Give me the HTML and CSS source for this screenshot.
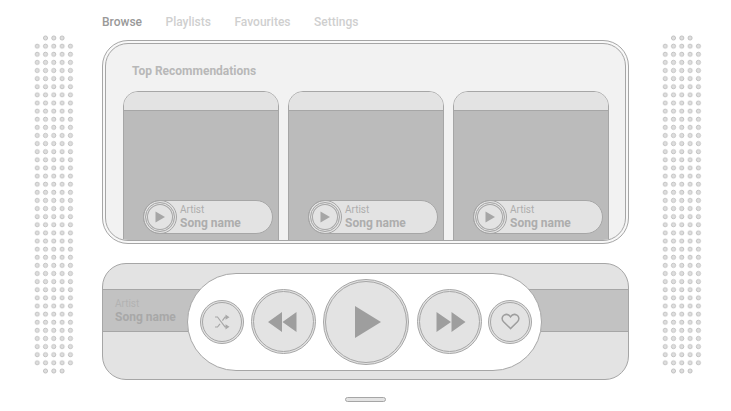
FILE: index.html
```html
<!DOCTYPE html>
<html lang="en">
<head>
    <meta charset="UTF-8">
    <meta name="viewport" content="width=device-width, initial-scale=1.0">
    <title>Music player</title>
    <link rel="stylesheet" href="styles.css">
</head>
<body>
    <div class="page">
        <svg class="dots dots-left" width="41" height="342" viewBox="0 0 41 342">
            <defs>
                <pattern id="dot" x="0" y="10.1" width="8.3" height="8.12" patternUnits="userSpaceOnUse">
                    <circle cx="4.2" cy="4.06" r="2.1"/>
                </pattern>
                <g id="dotfield">
                    <circle cx="12.5" cy="6" r="2.1"/>
                    <circle cx="20.8" cy="6" r="2.1"/>
                    <circle cx="29.1" cy="6" r="2.1"/>
                    <rect x="0" y="10.1" width="41" height="324.8" fill="url(#dot)" stroke="none"/>
                    <circle cx="12.5" cy="339" r="2.1"/>
                    <circle cx="20.8" cy="339" r="2.1"/>
                    <circle cx="29.1" cy="339" r="2.1"/>
                </g>
            </defs>
            <use href="#dotfield"/>
        </svg>

        <main class="main">
            <nav class="nav">
                <a class="nav-item active">Browse</a>
                <a class="nav-item">Playlists</a>
                <a class="nav-item">Favourites</a>
                <a class="nav-item">Settings</a>
            </nav>

            <section class="recs">
                <div class="recs-inner">
                    <h2 class="recs-title">Top Recommendations</h2>
                    <div class="cards">
                        <div class="card">
                            <div class="card-head"></div>
                            <div class="card-body">
                                <div class="song">
                                    <span class="mini-play"><svg width="12" height="12" viewBox="0 0 12 12"><path d="M1.5 0.5 L11 6 L1.5 11.5 Z"/></svg></span>
                                    <div class="song-text">
                                        <span class="artist">Artist</span>
                                        <span class="song-name">Song name</span>
                                    </div>
                                </div>
                            </div>
                        </div>
                        <div class="card">
                            <div class="card-head"></div>
                            <div class="card-body">
                                <div class="song">
                                    <span class="mini-play"><svg width="12" height="12" viewBox="0 0 12 12"><path d="M1.5 0.5 L11 6 L1.5 11.5 Z"/></svg></span>
                                    <div class="song-text">
                                        <span class="artist">Artist</span>
                                        <span class="song-name">Song name</span>
                                    </div>
                                </div>
                            </div>
                        </div>
                        <div class="card">
                            <div class="card-head"></div>
                            <div class="card-body">
                                <div class="song">
                                    <span class="mini-play"><svg width="12" height="12" viewBox="0 0 12 12"><path d="M1.5 0.5 L11 6 L1.5 11.5 Z"/></svg></span>
                                    <div class="song-text">
                                        <span class="artist">Artist</span>
                                        <span class="song-name">Song name</span>
                                    </div>
                                </div>
                            </div>
                        </div>
                    </div>
                </div>
            </section>

            <section class="player">
                <div class="band">
                    <div class="song-text">
                        <span class="artist">Artist</span>
                        <span class="song-name">Song name</span>
                    </div>
                </div>
                <div class="controls">
                    <button class="ctl ctl-s">
                        <svg width="16" height="16" viewBox="0 0 16 16" fill="none" stroke="#a8a8a8" stroke-width="1.2">
                            <path d="M1 3 H3.5 L11 12.8 H13"/>
                            <path d="M1 13 H3.5 L6 9.8 M8.4 6.6 L11 3.2 H13"/>
                            <path d="M11.5 0.6 V5.8 L15.5 3.2 Z M11.5 10.2 V15.4 L15.5 12.8 Z" fill="#a8a8a8" stroke="none"/>
                        </svg>
                    </button>
                    <button class="ctl ctl-m rew">
                        <svg width="29" height="20" viewBox="0 0 29 20"><path d="M14 0 V20 L0 10 Z M28.5 0 V20 L14.5 10 Z"/></svg>
                    </button>
                    <button class="ctl ctl-l">
                        <svg width="26" height="32" viewBox="0 0 26 32"><path d="M0 0 L26 16 L0 32 Z"/></svg>
                    </button>
                    <button class="ctl ctl-m ff">
                        <svg width="30" height="20" viewBox="0 0 30 20"><path d="M0.5 0 L15 10 L0.5 20 Z M15.5 0 L29.5 10 L15.5 20 Z"/></svg>
                    </button>
                    <button class="ctl ctl-s">
                        <svg width="19" height="17" viewBox="0 0 20 18" fill="none" stroke="#9e9e9e" stroke-width="1.6">
                            <path d="M10 16.5 L2.6 9.2 C0.4 7 0.8 3.6 3.2 2.2 C5.6 0.9 8.4 1.7 10 4.2 C11.6 1.7 14.4 0.9 16.8 2.2 C19.2 3.6 19.6 7 17.4 9.2 Z"/>
                        </svg>
                    </button>
                </div>
            </section>

            <div class="home-bar"></div>
        </main>

        <svg class="dots dots-right" width="41" height="342" viewBox="0 0 41 342">
            <use href="#dotfield"/>
        </svg>
    </div>
</body>
</html>
```

FILE: styles.css
```css
* {
    box-sizing: border-box;
}
html, body {
    margin: 0;
    background: #fff;
}
body {
    font-family: Roboto, "Liberation Sans", sans-serif;
    color: #aaa;
    overflow: hidden;
}
.page {
    display: flex;
    align-items: flex-start;
    width: 731px;
    height: 411px;
}
.dots {
    flex: none;
    margin-top: 32px;
    fill: #dedede;
    stroke: #a8a8a8;
    stroke-width: 0.6;
}
.dots-left {
    margin-left: 33px;
    margin-right: 28px;
}
.dots-right {
    margin-left: 32px;
}
#dot circle {
    fill: #dedede;
    stroke: #a8a8a8;
    stroke-width: 0.6;
}
.main {
    flex: none;
    width: 527px;
    display: flex;
    flex-direction: column;
}
.nav {
    display: flex;
    gap: 23.5px;
    height: 40px;
    padding-top: 15px;
    font-size: 12px;
    line-height: 15px;
    font-weight: 500;
    color: #cfcfcf;
}
.nav-item.active {
    color: #999;
}
.recs {
    height: 204px;
    border: 1px solid #a6a6a6;
    border-radius: 26px;
    padding: 2px;
    background: #f8f8f8;
}
.recs-inner {
    height: 100%;
    border: 1px solid #a6a6a6;
    border-radius: 23px;
    background: #f2f2f2;
    overflow: hidden;
    padding-left: 17px;
}
.recs-title {
    margin: 0;
    padding: 19px 0 0 9px;
    height: 47px;
    font-size: 12px;
    line-height: 16px;
    font-weight: 700;
    color: #b8b8b8;
}
.cards {
    display: flex;
    gap: 9px;
}
.card {
    width: 156px;
    height: 150px;
    display: flex;
    flex-direction: column;
    border: 1px solid #a6a6a6;
    border-radius: 15px 15px 0 0;
    overflow: hidden;
}
.card-head {
    height: 19px;
    flex: none;
    background: #e3e3e3;
    border-bottom: 1px solid #a6a6a6;
}
.card-body {
    flex: 1;
    background: #bbb;
    padding: 89px 0 0 19px;
}
.song {
    display: flex;
    align-items: center;
    gap: 3px;
    width: 130px;
    height: 34px;
    border: 1px solid #a6a6a6;
    border-radius: 17px;
    background: #e3e3e3;
}
.mini-play {
    flex: none;
    width: 34px;
    height: 34px;
    margin: -1px 0 -1px -1px;
    display: flex;
    align-items: center;
    justify-content: center;
    border: 3px double #a6a6a6;
    border-radius: 50%;
    box-shadow: inset 0 0 0 1px #e3e3e3, inset 0 0 0 2px #a6a6a6;
    fill: #a6a6a6;
}
.song-text {
    display: flex;
    flex-direction: column;
}
.artist {
    font-size: 10px;
    line-height: 11px;
    color: #adadad;
}
.song-name {
    font-size: 12px;
    line-height: 16px;
    font-weight: 700;
    color: #adadad;
}
.player {
    display: grid;
    align-items: center;
    height: 117px;
    margin-top: 19px;
    border: 1px solid #a6a6a6;
    border-radius: 24px;
    background: #e3e3e3;
    overflow: hidden;
}
.band {
    grid-area: 1 / 1;
    align-self: start;
    height: 43px;
    margin-top: 25px;
    border-top: 1px solid #a6a6a6;
    border-bottom: 1px solid #a6a6a6;
    background: #c2c2c2;
    padding: 8px 0 0 12px;
}
.band .artist {
    color: #b2b2b2;
}
.band .song-name {
    color: #a8a8a8;
}
.controls {
    grid-area: 1 / 1;
    justify-self: start;
    margin-left: 84px;
    width: 355px;
    height: 98px;
    display: flex;
    align-items: center;
    padding-left: 12px;
    border: 1px solid #a6a6a6;
    border-radius: 49px;
    background: #fff;
}
.ctl {
    flex: none;
    padding: 0;
    display: flex;
    align-items: center;
    justify-content: center;
    border: 3px double #a6a6a6;
    border-radius: 50%;
    background: #e3e3e3;
    fill: #9e9e9e;
}
.ctl-s {
    width: 44px;
    height: 44px;
}
.ctl-m {
    width: 65px;
    height: 65px;
    margin-left: 7px;
}
.rew {
    padding-right: 3px;
}
.ff {
    padding-left: 2px;
}
.ctl-l {
    width: 86px;
    height: 86px;
    margin-left: 7px;
    padding-left: 4px;
}
.ctl-l + .ctl-m {
    margin-left: 8px;
}
.ctl-m + .ctl-s {
    margin-left: 6px;
}
.home-bar {
    width: 41px;
    height: 5px;
    margin: 17px auto 0;
    border: 1px solid #a6a6a6;
    border-radius: 3px;
    background: #e3e3e3;
}
```
